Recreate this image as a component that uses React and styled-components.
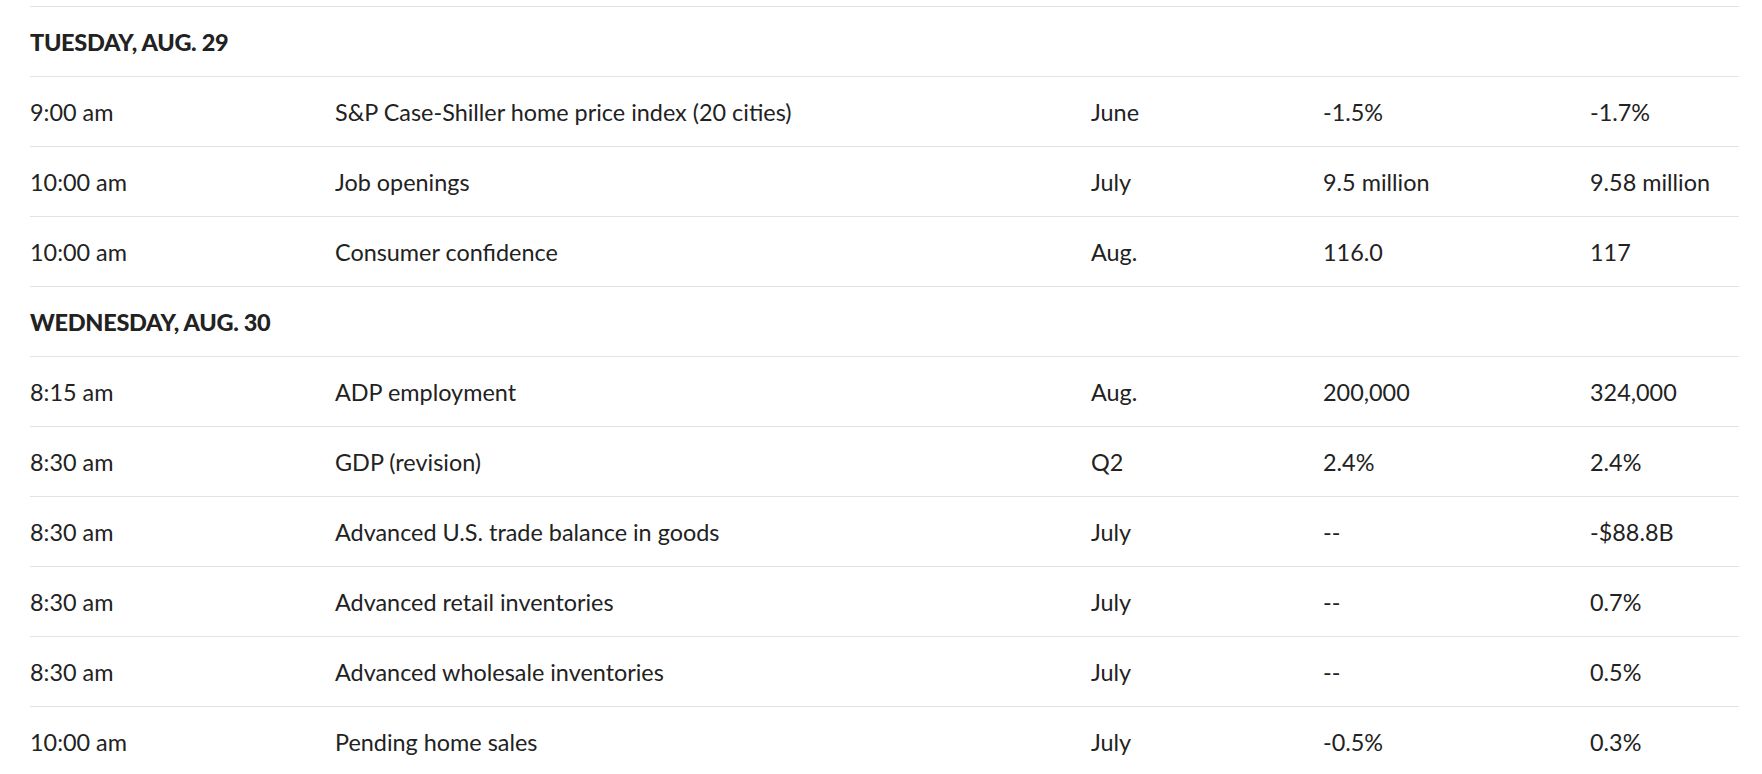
import React from "react";
import styled, { createGlobalStyle } from "styled-components";

const Global = createGlobalStyle`
  html, body { margin: 0; padding: 0; background: #fff; }
  body { font-family: Lato, "Liberation Sans", sans-serif; color: #222; }
  *, *::before, *::after { box-sizing: border-box; }
`;

const Page = styled.div`
  padding: 6px 23px 0 30px;
`;

const Table = styled.div`
  border-top: 1px solid #e2e2e2;
`;

const Row = styled.div`
  display: grid;
  grid-template-columns: 305px 756px 232px 267px 1fr;
  align-items: center;
  height: 70px;
  padding-top: 3px;
  border-bottom: 1px solid #e2e2e2;
  font-size: 23.4px;
  line-height: 1;
`;

const Heading = styled.div`
  height: 70px;
  display: flex;
  align-items: center;
  border-bottom: 1px solid #e2e2e2;
  font-size: 23.5px;
  font-weight: 900;
  text-transform: uppercase;
  letter-spacing: -0.3px;
`;

const Cell = styled.div`
  white-space: nowrap;
`;

const sections = [
  {
    day: "Tuesday, Aug. 29",
    rows: [
      ["9:00 am", "S&P Case-Shiller home price index (20 cities)", "June", "-1.5%", "-1.7%"],
      ["10:00 am", "Job openings", "July", "9.5 million", "9.58 million"],
      ["10:00 am", "Consumer confidence", "Aug.", "116.0", "117"],
    ],
  },
  {
    day: "Wednesday, Aug. 30",
    rows: [
      ["8:15 am", "ADP employment", "Aug.", "200,000", "324,000"],
      ["8:30 am", "GDP (revision)", "Q2", "2.4%", "2.4%"],
      ["8:30 am", "Advanced U.S. trade balance in goods", "July", "--", "-$88.8B"],
      ["8:30 am", "Advanced retail inventories", "July", "--", "0.7%"],
      ["8:30 am", "Advanced wholesale inventories", "July", "--", "0.5%"],
      ["10:00 am", "Pending home sales", "July", "-0.5%", "0.3%"],
    ],
  },
];

export default function App() {
  return (
    <>
      <Global />
      <Page>
        <Table>
          {sections.map((s) => (
            <React.Fragment key={s.day}>
              <Heading>{s.day}</Heading>
              {s.rows.map((r, i) => (
                <Row key={i}>
                  {r.map((c, j) => (
                    <Cell key={j}>{c}</Cell>
                  ))}
                </Row>
              ))}
            </React.Fragment>
          ))}
        </Table>
      </Page>
    </>
  );
}
